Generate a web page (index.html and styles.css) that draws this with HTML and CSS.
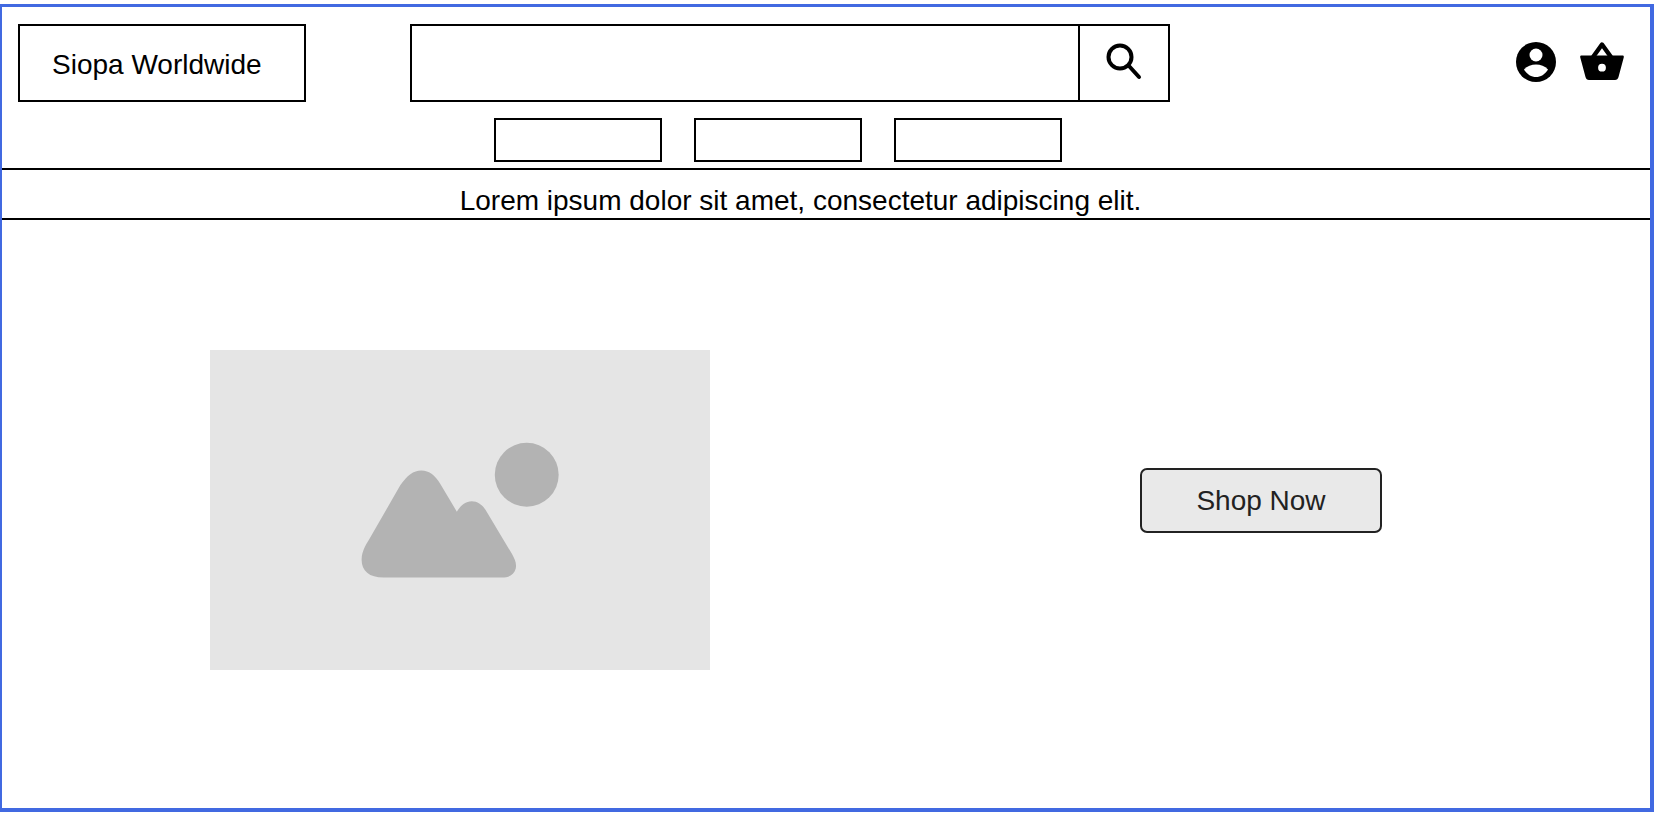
FILE: index.html
```html
<!DOCTYPE html>
<html lang="en">
<head>
    <meta charset="UTF-8">
    <meta name="viewport" content="width=device-width, initial-scale=1.0">
    <title>Siopa Worldwide</title>
    <link rel="stylesheet" href="styles.css">
</head>
<body>
    <div class="frame">
        <header class="top-row">
            <div class="logo">Siopa Worldwide</div>
            <div class="search">
                <div class="search-input"></div>
                <div class="search-button">
                    <svg class="search-icon" viewBox="0 0 36 37" width="36" height="37">
                        <circle cx="14" cy="14" r="11.500" fill="none" stroke="#000" stroke-width="4"/>
                        <path d="M23 23 L33 34" fill="none" stroke="#000" stroke-width="4" stroke-linecap="round"/>
                    </svg>
                </div>
            </div>
            <div class="actions">
                <svg viewBox="0 0 40 40" width="40" height="40">
                    <circle cx="20" cy="20" r="20" fill="#000"/>
                    <circle cx="20" cy="13" r="6.500" fill="#fff"/>
                    <path d="M8 27.500 C11 24 15.500 22.500 20 22.500 C24.500 22.500 29 24 32 27.500 C29 32.500 24.500 35 20 35 C15.500 35 11 32.500 8 27.500 Z" fill="#fff"/>
                </svg>
                <svg viewBox="0 0 44 38" width="44" height="38">
                    <path d="M13 15 L22 2.500 L31 15" fill="none" stroke="#000" stroke-width="4.400" stroke-linejoin="round"/>
                    <path fill-rule="evenodd" d="M1.500 13.500 H42.500 C43.500 13.500 44 14.200 43.800 15.200 L38.500 35 C38 37 36.800 38 35 38 H9 C7.200 38 6 37 5.500 35 L0.200 15.200 C0 14.200 0.500 13.500 1.500 13.500 Z M22 21.800 A3.900 3.900 0 1 0 22 29.600 A3.900 3.900 0 1 0 22 21.800 Z" fill="#000"/>
                </svg>
            </div>
        </header>

        <nav class="nav">
            <div class="nav-item"></div>
            <div class="nav-item"></div>
            <div class="nav-item"></div>
        </nav>

        <div class="banner">Lorem ipsum dolor sit amet, consectetur adipiscing elit.</div>

        <main class="hero">
            <div class="placeholder">
                <svg viewBox="62 65 595 408" width="198" height="136">
                    <path d="M130 472 C85 472 62 450 64 415 C65 395 75 375 85 360 L180 195 C200 165 220 150 243 150 C268 150 285 165 300 190 L350 274 C360 258 375 243 395 243 C412 243 425 252 437 270 L515 400 C525 418 530 430 527 445 C522 465 505 472 485 472 Z" fill="#b3b3b3"/>
                    <circle cx="560" cy="163" r="96" fill="#b3b3b3"/>
                </svg>
            </div>
            <button class="shop-button" type="button">Shop Now</button>
        </main>
    </div>
</body>
</html>
```

FILE: styles.css
```css
* {
    box-sizing: border-box;
}

body {
    margin: 0;
    background-color: #fff;
    color: #000;
    font-family: 'Liberation Sans', Arial, sans-serif;
}

.frame {
    height: 808px;
    margin-top: 4px;
    border-style: solid;
    border-color: #4169e1;
    border-width: 3px 4px 4px 2px;
}

.top-row {
    display: flex;
    align-items: flex-start;
    padding: 17px 26px 0 16px;
}

.logo {
    display: flex;
    align-items: center;
    width: 288px;
    height: 78px;
    padding: 4px 0 0 32px;
    border: 2px solid #000;
    font-size: 28px;
}

.search {
    display: flex;
    width: 760px;
    height: 78px;
    margin-left: 104px;
    border: 2px solid #000;
}

.search-input {
    flex: 1;
}

.search-button {
    display: flex;
    width: 90px;
    padding: 17px 0 0 26px;
    border-left: 2px solid #000;
}

.actions {
    display: flex;
    gap: 24px;
    align-items: flex-start;
    margin-left: auto;
    padding-top: 18px;
}

.nav {
    display: flex;
    gap: 32px;
    margin-top: 16px;
    padding-left: 492px;
}

.nav-item {
    width: 168px;
    height: 44px;
    border: 2px solid #000;
}

.banner {
    height: 52px;
    margin-top: 6px;
    padding: 14px 51px 0 0;
    border-top: 2px solid #000;
    border-bottom: 2px solid #000;
    font-size: 28px;
    line-height: 34px;
    text-align: center;
}

.hero {
    display: flex;
    align-items: center;
    padding: 130px 0 0 208px;
}

.placeholder {
    display: flex;
    align-items: center;
    justify-content: center;
    width: 500px;
    height: 320px;
    background-color: #e5e5e5;
}

.shop-button {
    width: 242px;
    height: 65px;
    margin: 0 0 19px 430px;
    border: 2px solid #222;
    border-radius: 7px;
    background-color: #e9e9e9;
    color: #222;
    font-family: inherit;
    font-size: 28px;
}
```
